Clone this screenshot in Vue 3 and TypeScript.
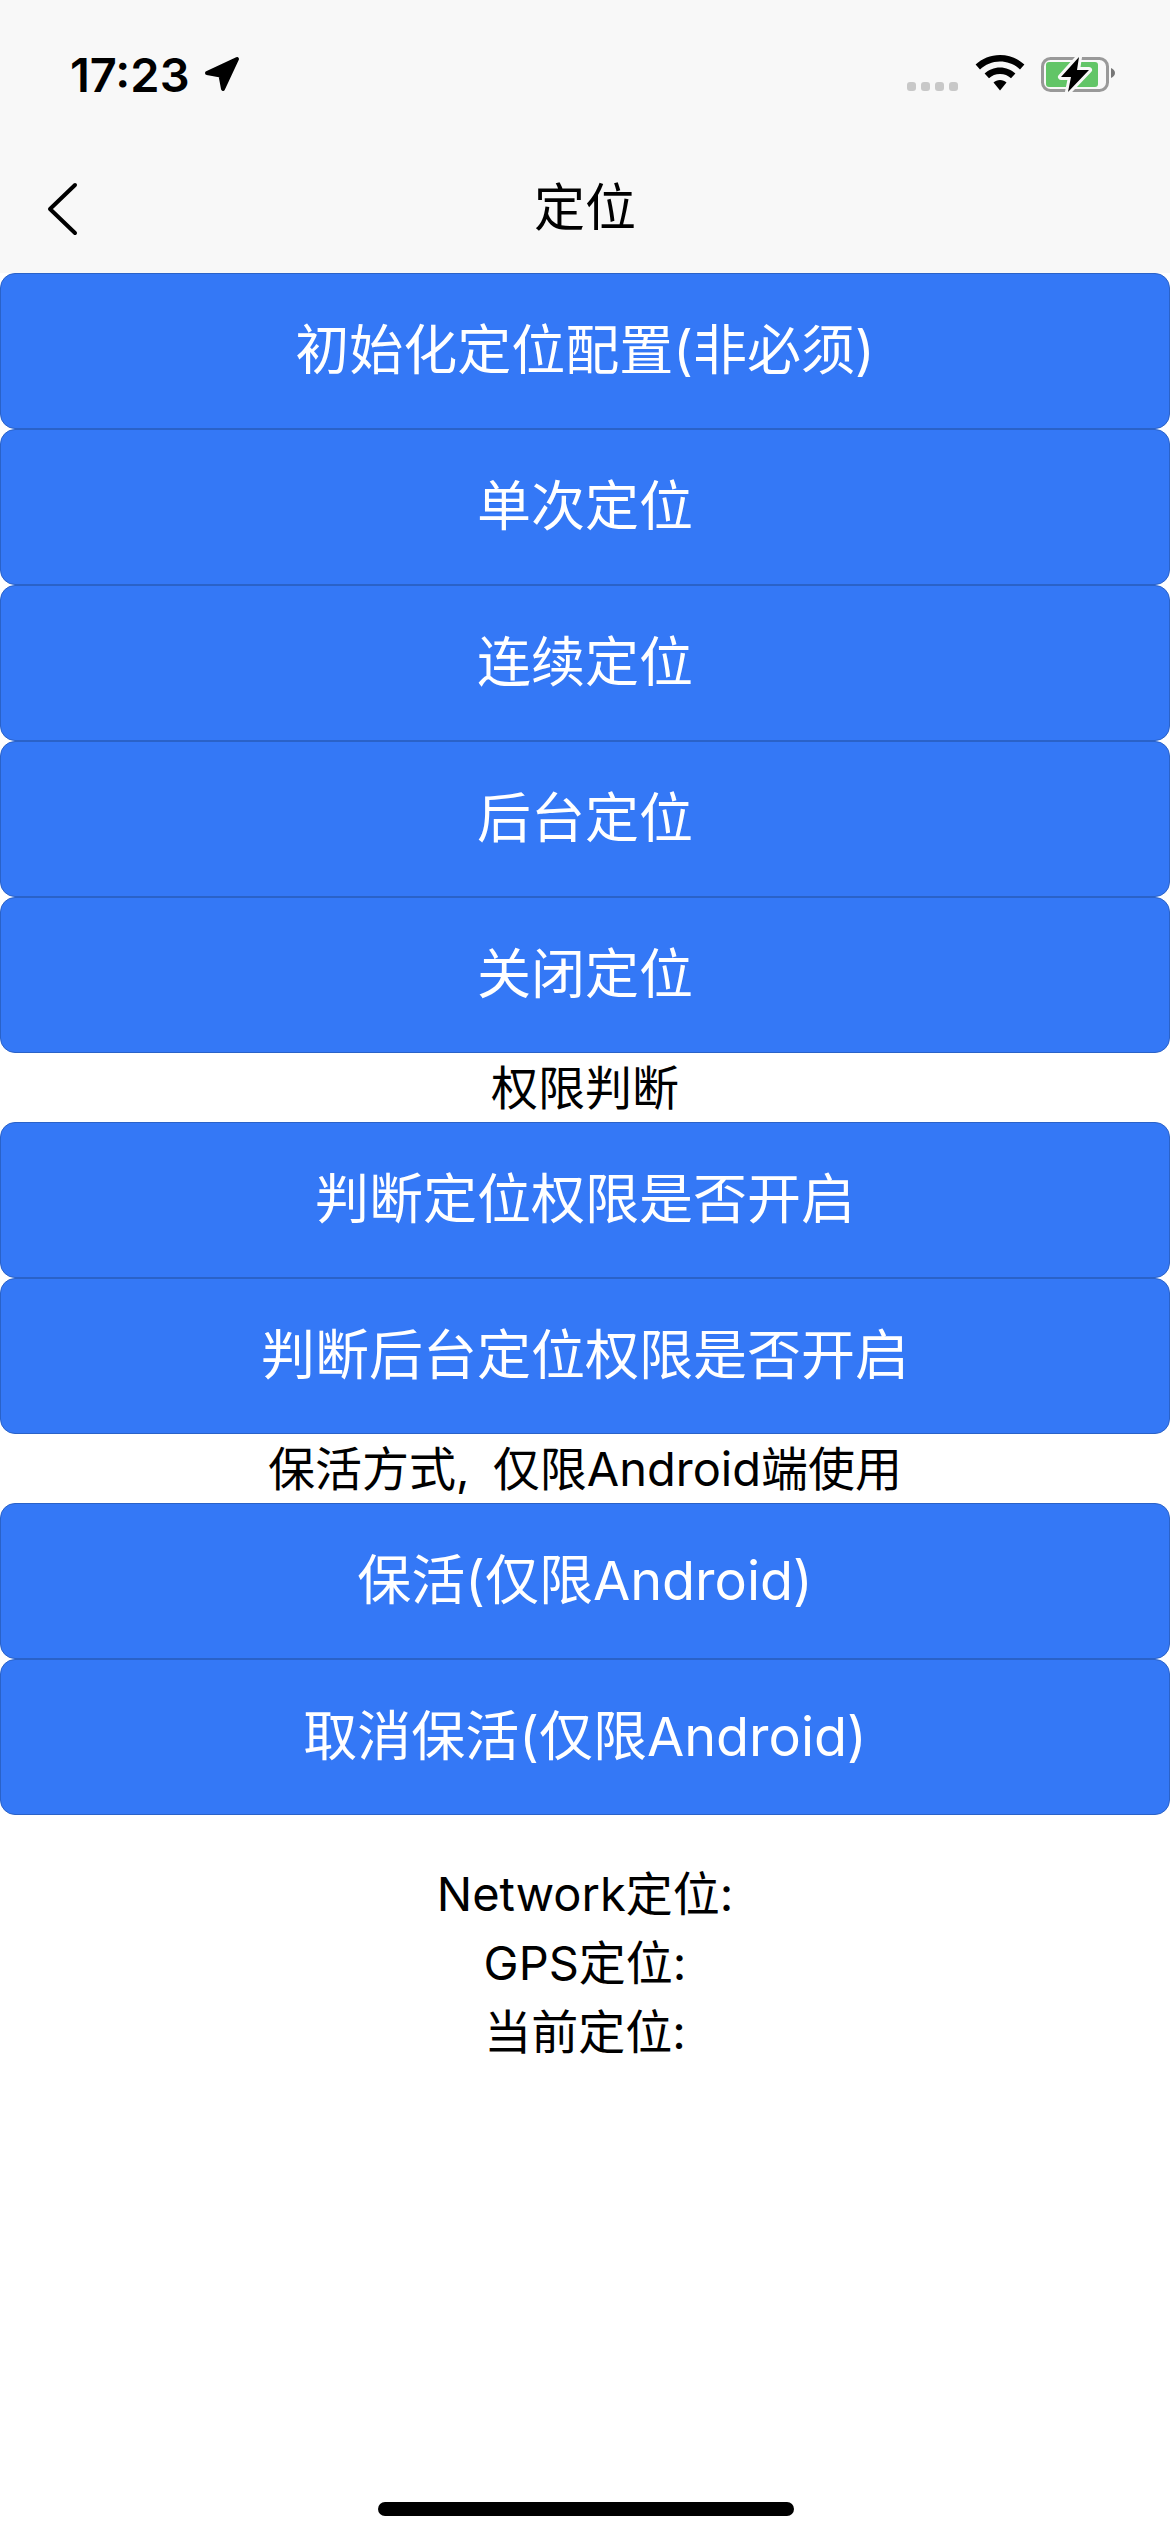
<script setup lang="ts">
const topButtons: string[] = ['初始化定位配置(非必须)', '单次定位', '连续定位', '后台定位', '关闭定位']
const permissionButtons: string[] = ['判断定位权限是否开启', '判断后台定位权限是否开启']
const keepAliveButtons: string[] = ['保活(仅限Android)', '取消保活(仅限Android)']
const results: string[] = ['Network定位:', 'GPS定位:', '当前定位:']
</script>

<template>
  <div class="page">
    <header class="top">
      <div class="status-bar">
        <div class="status-left">
          <span class="time">17:23</span>
          <svg class="loc" width="36" height="36" viewBox="0 0 36 36">
            <path d="M3 17 L33 3 L19 33 L16.5 19.5 Z" fill="#000" stroke="#000" stroke-width="4" stroke-linejoin="round" />
          </svg>
        </div>
        <div class="status-right">
          <div class="dots"><i></i><i></i><i></i><i></i></div>
          <svg class="wifi" width="50" height="38" viewBox="0 0 50 38">
            <path d="M25 0 C15.5 0 7 3.6 0.6 9.6 L5 14.4 C10.2 9.4 17.2 6.4 25 6.4 C32.8 6.4 39.8 9.4 45 14.4 L49.4 9.6 C43 3.6 34.5 0 25 0Z" fill="#000" />
            <path d="M25 12.4 C19 12.4 13.6 14.7 9.6 18.5 L14 23.2 C16.9 20.6 20.7 19 25 19 C29.3 19 33.1 20.6 36 23.2 L40.4 18.5 C36.4 14.7 31 12.4 25 12.4Z" fill="#000" />
            <path d="M25 25 C22.4 25 20.2 26 18.5 27.6 L25 35.5 L31.5 27.6 C29.8 26 27.6 25 25 25Z" fill="#000" />
          </svg>
          <svg class="battery" width="76" height="38" viewBox="0 0 76 38">
            <rect x="2.5" y="3.5" width="65" height="32" rx="8" fill="none" stroke="#999" stroke-width="3" />
            <rect x="6" y="7" width="52" height="25" rx="3" fill="#62c567" />
            <path d="M71 13 Q75 15 75 18 Q75 21 71 23Z" fill="#777" />
            <path d="M39 2 L21 22 L31 22 L28 37 L49 15 L37 15 Z" fill="#000" stroke="#f8f8f8" stroke-width="6" paint-order="stroke" stroke-linejoin="round" />
          </svg>
        </div>
      </div>
      <nav class="nav-bar">
        <svg class="back" width="32" height="54" viewBox="0 0 32 54">
          <path d="M28 3 L3 27 L28 51" fill="none" stroke="#000" stroke-width="4" stroke-linecap="round" stroke-linejoin="round" />
        </svg>
        <h1 class="title">定位</h1>
      </nav>
    </header>

    <main>
      <button v-for="b in topButtons" :key="b" class="btn">{{ b }}</button>
      <div class="label">权限判断</div>
      <button v-for="b in permissionButtons" :key="b" class="btn">{{ b }}</button>
      <div class="label">保活方式, 仅限Android端使用</div>
      <button v-for="b in keepAliveButtons" :key="b" class="btn">{{ b }}</button>
      <div class="results">
        <div v-for="r in results" :key="r" class="label">{{ r }}</div>
      </div>
    </main>

    <div class="home-indicator"></div>
  </div>
</template>

<style>
html, body {
  margin: 0;
  background: #fff;
}
</style>

<style scoped>
.page {
  position: relative;
  height: 2532px;
  width: 1170px;
  background: #fff;
  font-family: Inter, "Noto Sans CJK SC", sans-serif;
  color: #000;
  overflow: hidden;
}

.top {
  background: #f8f8f8;
  height: 273px;
}

.status-bar {
  height: 140px;
  display: flex;
  justify-content: space-between;
  padding: 0 54px 0 70px;
  box-sizing: border-box;
}

.status-left {
  display: flex;
  align-items: center;
  height: 148px;
  gap: 14px;
}

.time {
  font-size: 47px;
  font-weight: 600;
  line-height: 1;
}

.status-right {
  display: flex;
  align-items: flex-start;
  padding-top: 55px;
}

.dots {
  display: flex;
  gap: 5px;
  margin-top: 27px;
  margin-right: 17px;
}

.dots i {
  width: 9px;
  height: 9px;
  border-radius: 3px;
  background: #c8c8c8;
}

.wifi {
  margin-right: 15px;
}

.nav-bar {
  height: 133px;
  display: flex;
  align-items: center;
  justify-content: center;
  position: relative;
}

.back {
  position: absolute;
  left: 47px;
  top: 42px;
}

.title {
  margin: 0;
  font-size: 51px;
  font-weight: 400;
  line-height: 1;
  position: relative;
  top: 1px;
}

.btn {
  display: block;
  width: 100%;
  height: 156px;
  box-sizing: border-box;
  background: #3478f6;
  border: 1.5px solid #2a62c8;
  border-radius: 15px;
  color: #fff;
  font-family: inherit;
  font-size: 54px;
  line-height: 1;
  padding: 0;
}

.label {
  font-size: 47px;
  line-height: 69px;
  text-align: center;
  word-spacing: 10px;
}

.results {
  padding-top: 44px;
}

.home-indicator {
  position: absolute;
  left: 378px;
  bottom: 16px;
  width: 416px;
  height: 14px;
  border-radius: 7px;
  background: #000;
}
</style>
